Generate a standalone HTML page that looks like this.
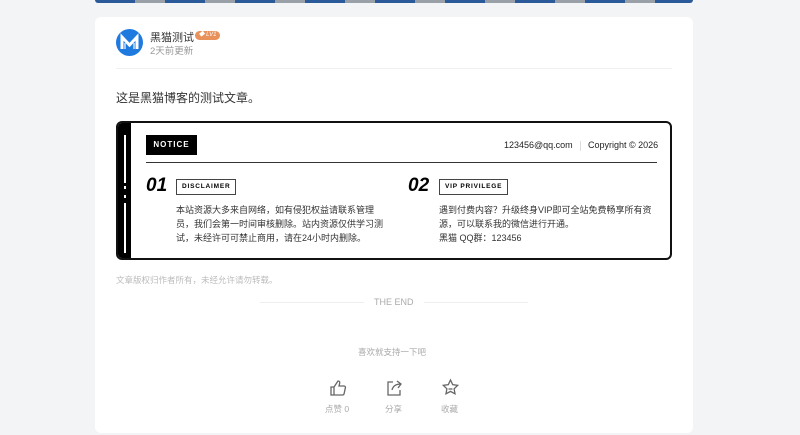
<!DOCTYPE html>
<html><head><meta charset="utf-8"><style>
*{margin:0;padding:0;box-sizing:border-box}
body{width:800px;height:435px;background:#f3f4f6;font-family:"Liberation Sans","Noto Sans CJK SC",sans-serif;position:relative;overflow:hidden}
.top{position:absolute;left:95px;top:0;width:598px;height:3px;background:repeating-linear-gradient(90deg,#2a5a9a 0 40px,#9aa0a8 40px 70px);border-radius:0 0 3px 3px}
.card{position:absolute;left:95px;top:17px;width:598px;height:416px;background:#fff;border-radius:6px}
.abs{position:absolute}
.cn{font-family:"Liberation Sans","Noto Sans CJK SC",sans-serif}
</style></head><body>
<div class="top"></div>
<div class="card"></div>
<svg class="abs" style="left:116px;top:29px" width="27" height="27" viewBox="0 0 27 27"><circle cx="13.5" cy="13.5" r="13.5" fill="#1f7ae0"/><path d="M6 20V8l7.5 8L21 8v12" fill="none" stroke="#fff" stroke-width="3"/><path d="M9 20v-6M18 20v-6" stroke="#cfe3ff" stroke-width="1.5"/></svg>
<div class="abs" style="left:150px;top:29px;font-size:11px;color:#333">黑猫测试</div>
<div class="abs" style="left:195px;top:31px;width:25px;height:9px;border-radius:5px;background:#e8915a;font-size:6px;color:#fff;line-height:9px;text-align:center;font-style:italic">◆ LV1</div>
<div class="abs" style="left:150px;top:43px;font-size:9.5px;color:#999">2天前更新</div>
<div class="abs" style="left:116px;top:68px;width:556px;height:1px;background:#f0f0f0"></div>
<div class="abs" style="left:116px;top:89px;font-size:12px;color:#333">这是黑猫博客的测试文章。</div>

<div class="abs" style="left:116px;top:121px;width:556px;height:139px;border:2px solid #111;border-radius:6px;overflow:hidden">
 <div class="abs" style="left:0;top:0;width:13px;height:100%;background:#000"></div>
 <div class="abs" style="left:6px;top:12px;width:2px;height:48px;background:#fff"></div>
 <div class="abs" style="left:6px;top:63px;width:2px;height:3px;background:#fff"></div>
 <div class="abs" style="left:6px;top:72px;width:2px;height:3px;background:#fff"></div>
 <div class="abs" style="left:6px;top:80px;width:2px;height:50px;background:#fff"></div>
 <div class="abs" style="left:28px;top:12px;width:51px;height:20px;background:#000;color:#fff;font-size:8px;font-weight:bold;letter-spacing:1px;line-height:20px;text-align:center">NOTICE</div>
 <div class="abs" style="left:386px;top:17px;font-size:9px;color:#222">123456@qq.com</div>
 <div class="abs" style="left:462px;top:18px;width:1px;height:10px;background:#ddd"></div>
 <div class="abs" style="left:470px;top:17px;font-size:9px;color:#222">Copyright © 2026</div>
 <div class="abs" style="left:28px;top:39px;width:511px;height:1px;background:#333"></div>
 <div class="abs" style="left:28px;top:52px;font-size:19px;font-weight:bold;font-style:italic;color:#000">01</div>
 <div class="abs" style="left:58px;top:56px;height:16px;border:1px solid #444;padding:0 5px;font-size:6.5px;font-weight:bold;letter-spacing:.8px;line-height:14px">DISCLAIMER</div>
 <div class="abs cn" style="left:58px;top:80px;width:210px;font-size:9px;line-height:14px;color:#333">本站资源大多来自网络，如有侵犯权益请联系管理员，我们会第一时间审核删除。站内资源仅供学习测试，未经许可可禁止商用，请在24小时内删除。</div>
 <div class="abs" style="left:290px;top:52px;font-size:19px;font-weight:bold;font-style:italic;color:#000">02</div>
 <div class="abs" style="left:321px;top:56px;height:16px;border:1px solid #444;padding:0 5px;font-size:6.5px;font-weight:bold;letter-spacing:.8px;line-height:14px">VIP PRIVILEGE</div>
 <div class="abs cn" style="left:321px;top:80px;width:222px;font-size:9px;line-height:14px;color:#333">遇到付费内容？升级终身VIP即可全站免费畅享所有资源，可以联系我的微信进行开通。<br>黑猫 QQ群：123456</div>
</div>

<div class="abs" style="left:116px;top:274px;font-size:8.5px;color:#bbb">文章版权归作者所有，未经允许请勿转载。</div>
<div class="abs" style="left:260px;top:302px;width:104px;height:1px;background:#eee"></div>
<div class="abs" style="left:374px;top:297px;font-size:9px;color:#aaa">THE END</div>
<div class="abs" style="left:424px;top:302px;width:104px;height:1px;background:#eee"></div>
<div class="abs" style="left:358px;top:346px;font-size:8.5px;color:#aaa">喜欢就支持一下吧</div>
<svg class="abs" style="left:329px;top:379px" width="18" height="18" viewBox="0 0 18 18" fill="none" stroke="#666" stroke-width="1.3"><path d="M2 8h3v8H2zM5 8l4-6c1.5 0 2 1 1.6 2.5L10 7h5c1 0 1.6.8 1.4 1.7l-1.3 6c-.2.8-.9 1.3-1.600 1.3H5"/></svg>
<svg class="abs" style="left:385px;top:379px" width="18" height="18" viewBox="0 0 18 18" fill="none" stroke="#666" stroke-width="1.3"><path d="M8 3H3v13h12v-5M7 11c1-4 4-6 9-6M12 2l4 3-3 4"/></svg>
<svg class="abs" style="left:441px;top:378px" width="19" height="19" viewBox="0 0 19 19" fill="none" stroke="#666" stroke-width="1.3"><path d="M9.5 2l2.2 4.6 5 .7-3.6 3.5.9 5-4.5-2.4-4.5 2.4.9-5L2.3 7.300l5-.7z"/><path d="M7.5 11h4"/></svg>
<div class="abs" style="left:325px;top:403px;font-size:8.5px;color:#aaa">点赞 0</div>
<div class="abs" style="left:385px;top:403px;font-size:8.5px;color:#aaa">分享</div>
<div class="abs" style="left:441px;top:403px;font-size:8.5px;color:#aaa">收藏</div>
</body></html>
